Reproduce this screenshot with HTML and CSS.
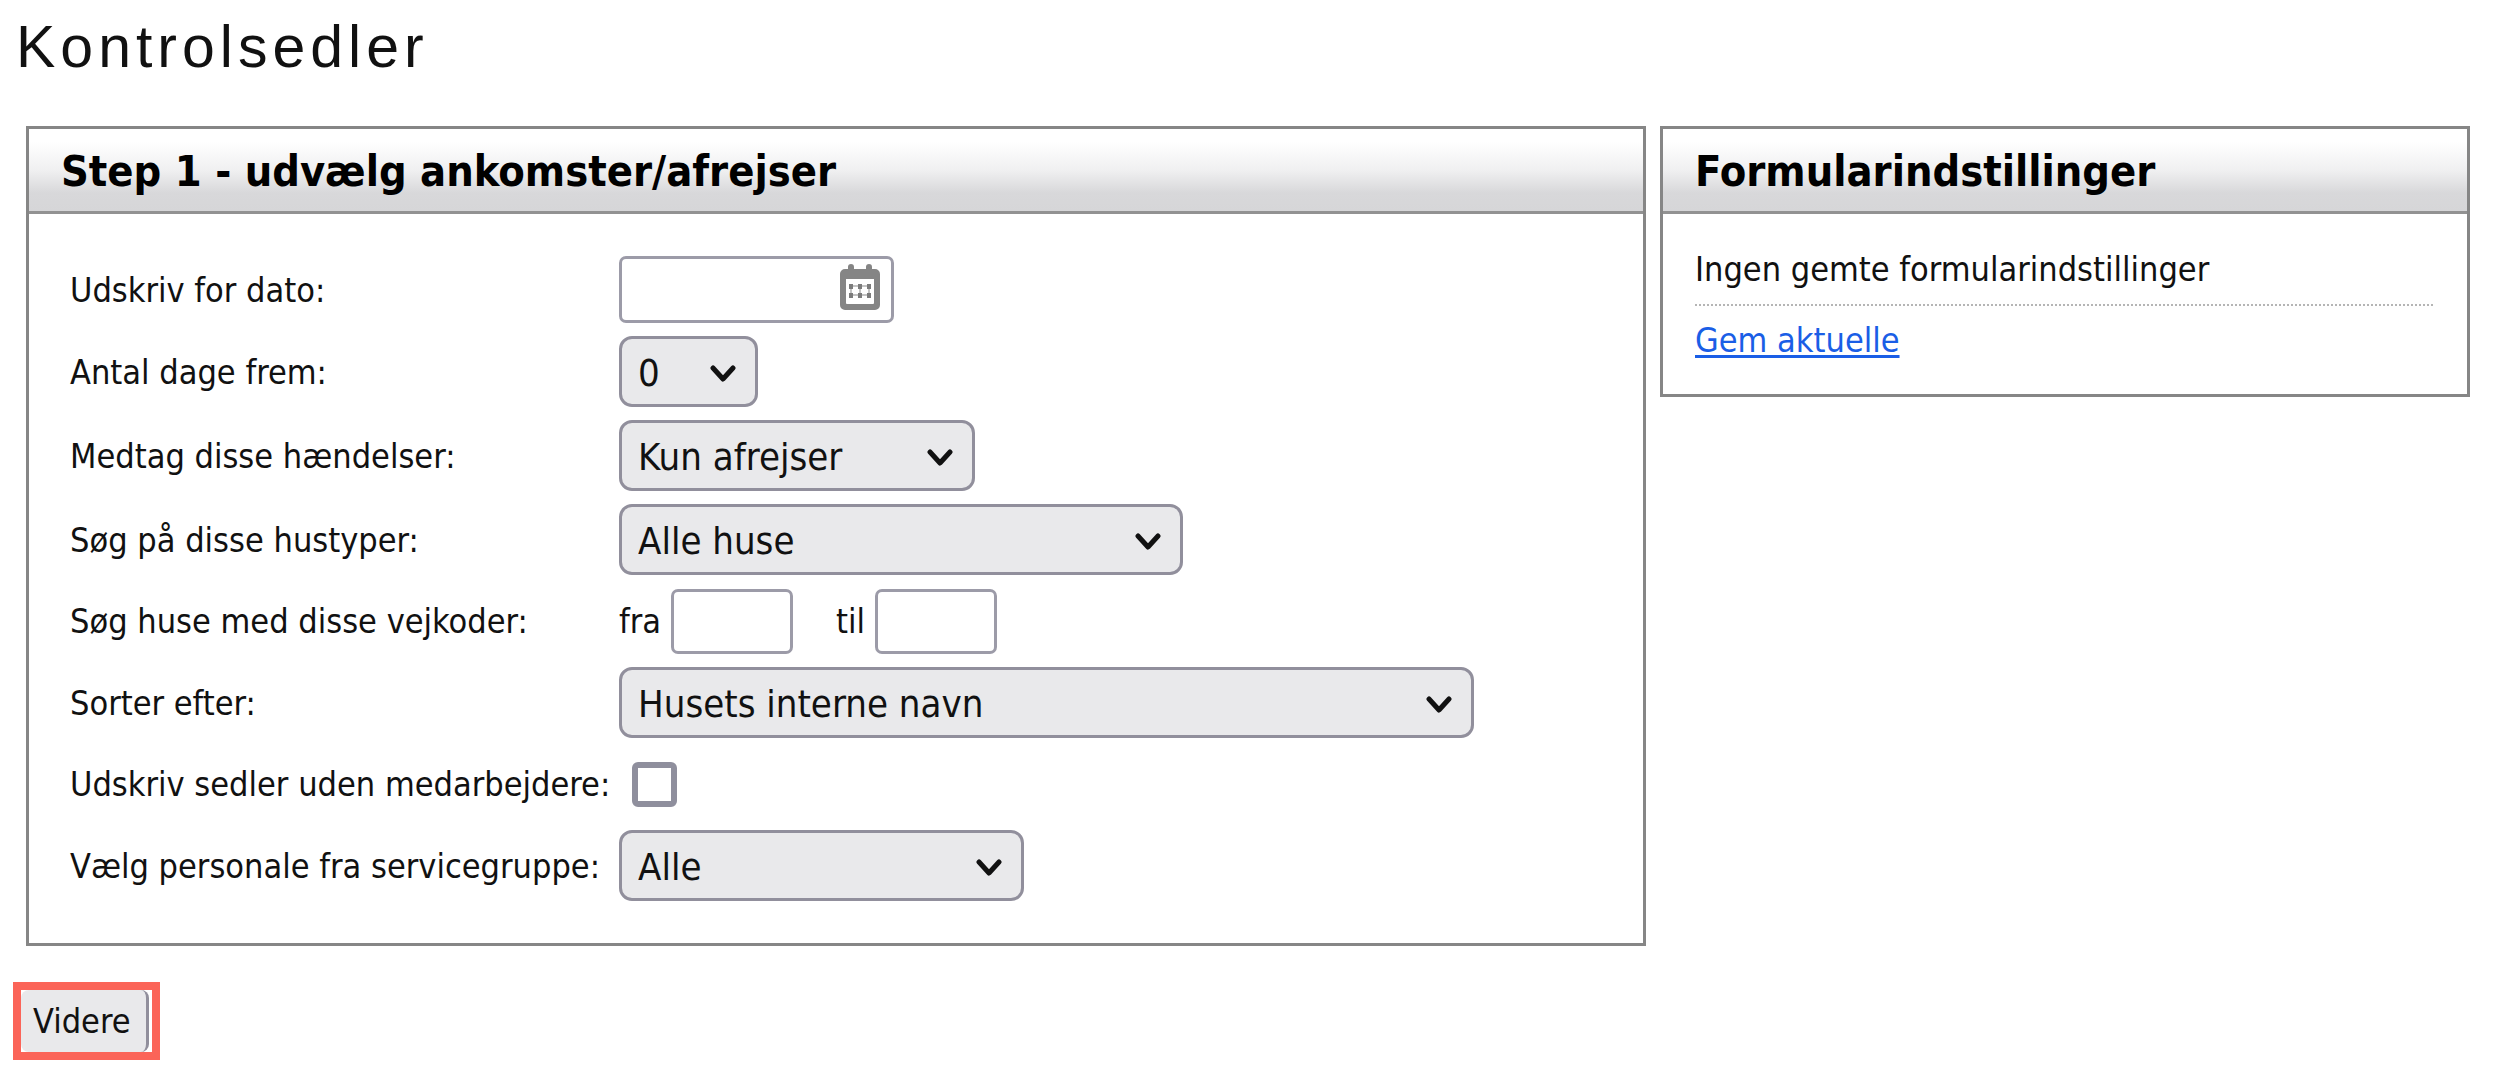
FILE: index.html
```html
<!DOCTYPE html>
<html lang="da">
<head>
    <meta charset="UTF-8">
    <meta name="viewport" content="width=device-width, initial-scale=1.0">
    <title>Kontrolsedler</title>
    <link rel="stylesheet" href="styles.css">
</head>
<body>
    <h1>Kontrolsedler</h1>

    <form id="slips-form">
        <div class="panels">
            <section class="panel">
                <h2>Step 1 - udvælg ankomster/afrejser</h2>
                <div class="fields">
                    <label for="date">Udskriv for dato:</label>
                    <div class="date-box">
                        <input type="text" id="date" class="date">
                        <svg class="calendar" viewBox="0 0 42 46" aria-hidden="true">
                            <path fill="#858585" fill-rule="evenodd" d="M9 5V3a3 3 0 0 1 6 0v2h12V3a3 3 0 0 1 6 0v2h3a5 5 0 0 1 5 5v31a5 5 0 0 1-5 5H6a5 5 0 0 1-5-5V10a5 5 0 0 1 5-5zM7 15v24a1 1 0 0 0 1 1h26a1 1 0 0 0 1-1V15z"/>
                            <path fill="none" stroke="#c4c4c4" stroke-width="2" d="M11 22h20M11 31h20M12 22v9M21 22v9M30 22v9"/>
                            <path fill="#7c7c7c" d="M10 20h4v5h-4zM19 20h4v5h-4zM28 20h4v5h-4zM10 29h4v5h-4zM19 29h4v5h-4zM28 29h4v5h-4z"/>
                        </svg>
                    </div>

                    <label for="days">Antal dage frem:</label>
                    <div class="select-box days">
                        <select id="days"><option>0</option></select>
                        <svg class="arrow" viewBox="0 0 26 18" aria-hidden="true"><path d="M3 3l10 11L23 3"/></svg>
                    </div>

                    <label for="events">Medtag disse hændelser:</label>
                    <div class="select-box events">
                        <select id="events"><option>Kun afrejser</option></select>
                        <svg class="arrow" viewBox="0 0 26 18" aria-hidden="true"><path d="M3 3l10 11L23 3"/></svg>
                    </div>

                    <label for="house-type">Søg på disse hustyper:</label>
                    <div class="select-box house-type">
                        <select id="house-type"><option>Alle huse</option></select>
                        <svg class="arrow" viewBox="0 0 26 18" aria-hidden="true"><path d="M3 3l10 11L23 3"/></svg>
                    </div>

                    <span>Søg huse med disse vejkoder:</span>
                    <div class="range">
                        <label for="code-from">fra</label>
                        <input type="text" id="code-from" class="code">
                        <label for="code-to" class="to">til</label>
                        <input type="text" id="code-to" class="code">
                    </div>

                    <label for="sort">Sorter efter:</label>
                    <div class="select-box sort">
                        <select id="sort"><option>Husets interne navn</option></select>
                        <svg class="arrow" viewBox="0 0 26 18" aria-hidden="true"><path d="M3 3l10 11L23 3"/></svg>
                    </div>

                    <label for="no-staff">Udskriv sedler uden medarbejdere:</label>
                    <div class="check-box">
                        <input type="checkbox" id="no-staff">
                    </div>

                    <label for="group">Vælg personale fra servicegruppe:</label>
                    <div class="select-box group">
                        <select id="group"><option>Alle</option></select>
                        <svg class="arrow" viewBox="0 0 26 18" aria-hidden="true"><path d="M3 3l10 11L23 3"/></svg>
                    </div>
                </div>
            </section>

            <section class="panel">
                <h2>Formularindstillinger</h2>
                <div class="settings">
                    <p>Ingen gemte formularindstillinger</p>
                    <a href="#">Gem aktuelle</a>
                </div>
            </section>
        </div>

        <div class="highlight">
            <button type="submit">Videre</button>
        </div>
    </form>
</body>
</html>
```
FILE: styles.css
```css
* {
    box-sizing: border-box;
}

body {
    margin: 0;
    padding: 12px 26px 24px;
    background: #fff;
    color: #111;
    font-family: Tahoma, "DejaVu Sans Condensed", "DejaVu Sans", sans-serif;
    font-size: 34px;
    line-height: 40px;
}

h1 {
    margin: 0 0 44px -10px;
    font-family: Arial, "Liberation Sans", sans-serif;
    font-size: 59px;
    font-weight: normal;
    line-height: 70px;
    letter-spacing: 5px;
}

.panels {
    display: grid;
    grid-template-columns: 2fr 1fr;
    align-items: start;
    gap: 14px;
}

.panel {
    border: 3px solid #868686;
}

h2 {
    margin: 0;
    padding: 17px 32px 15px;
    border-bottom: 3px solid #929292;
    background: linear-gradient(#fff 15%, #f0f0f1 50%, #d8d8da 78%, #d6d6d8);
    color: #000;
    font-size: 43px;
    line-height: 50px;
}

.fields {
    display: grid;
    grid-template-columns: 536px 1fr;
    grid-auto-rows: minmax(66px, auto);
    align-items: center;
    gap: 13px;
    padding: 42px 41px;
}

.fields > label,
.fields > span {
    white-space: nowrap;
}

input,
select,
button {
    margin: 0;
    font-family: inherit;
    color: #111;
}

input[type="text"] {
    border: 3px solid #9c9ba8;
    border-radius: 7px;
    background: #fff;
    padding: 0 12px;
    font-size: 34px;
}

.date-box {
    position: relative;
    width: 275px;
}

.date {
    display: block;
    width: 100%;
    height: 67px;
}

.calendar {
    position: absolute;
    top: 8px;
    right: 13px;
    width: 42px;
    height: 46px;
}

.select-box {
    position: relative;
}

select {
    display: block;
    appearance: none;
    width: 100%;
    height: 71px;
    padding: 3px 60px 0 16px;
    border: 3px solid #918f9c;
    border-radius: 13px;
    background: #e9e9eb;
    font-size: 38px;
}

.arrow {
    position: absolute;
    top: 29px;
    right: 22px;
    width: 26px;
    height: 18px;
    fill: none;
    stroke: #111;
    stroke-width: 5;
    stroke-linecap: round;
    stroke-linejoin: round;
    pointer-events: none;
}

.days {
    width: 139px;
}

.events {
    width: 356px;
}

.house-type {
    width: 564px;
}

.sort {
    width: 855px;
}

.group {
    width: 405px;
}

.range {
    display: flex;
    align-items: center;
    gap: 10px;
}

.range .to {
    margin-left: 33px;
}

.code {
    width: 122px;
    height: 65px;
}

.check-box {
    display: flex;
    padding-left: 13px;
}

input[type="checkbox"] {
    appearance: none;
    width: 45px;
    height: 45px;
    border: 6px solid #8f8f9d;
    border-radius: 6px;
    background: #fff;
}

.settings {
    padding: 35px 34px 34px 32px;
}

.settings p {
    margin: 0 0 14px;
    padding-bottom: 15px;
    border-bottom: 2px dotted #b5b5b5;
}

a {
    color: #1a5ee6;
    text-decoration-thickness: 3px;
    text-underline-offset: 3px;
}

.highlight {
    display: inline-flex;
    margin: 36px 0 0 -13px;
    padding-right: 3px;
    border: 8px solid #fb6458;
}

button {
    height: 62px;
    padding: 0 15px 0 12px;
    border: 0 solid #918f9c;
    border-right-width: 3px;
    border-radius: 8px;
    background: #e9e9eb;
    font-size: 34px;
}
```
